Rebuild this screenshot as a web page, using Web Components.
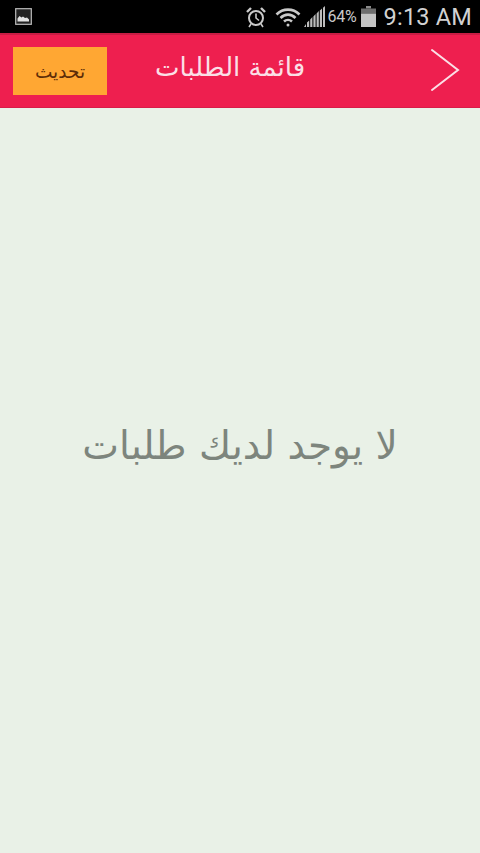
<!DOCTYPE html>
<html lang="ar">
<head>
<meta charset="utf-8">
<title>قائمة الطلبات</title>
<style>
  html, body { margin: 0; height: 100%; background: #e9f1e7; }
  body { display: flex; flex-direction: column; height: 853px; overflow: hidden; font-family: "DejaVu Sans", "Noto Sans", sans-serif; }
</style>
</head>
<body>
<status-bar></status-bar>
<app-header title-text="قائمة الطلبات" action="تحديث"></app-header>
<empty-state>لا يوجد لديك طلبات</empty-state>

<script>
class StatusBar extends HTMLElement {
  connectedCallback() {
    this.attachShadow({ mode: 'open' });
    this.shadowRoot.innerHTML = `
      <style>
        :host { display: flex; align-items: center; height: 33px; background: #000; color: #c9c9c9; padding: 0 8px 0 15px; font-family: "Roboto", "Liberation Sans", sans-serif; flex: none; }
        .right { display: flex; align-items: center; margin-left: auto; }
        svg { display: block; }
        .pct { font-size: 16px; margin: 0 4px 0 3px; letter-spacing: -0.2px; }
        .time { font-size: 23.5px; margin-left: 8px; letter-spacing: 0.2px; color: #d2d2d2; }
      </style>
      <svg width="17" height="17" viewBox="0 0 17 17">
        <rect x="0.7" y="0.7" width="15.6" height="15.6" fill="#222" stroke="#bdbdbd" stroke-width="1.2"/>
        <path d="M2.5 13.5v-3l2-2.500 2 1.500 1.500-1 2 1.500 2-.5 2 2v2z" fill="#e2e2e2"/>
      </svg>
      <div class="right">
        <svg width="22" height="22" viewBox="0 0 22 22" fill="none" stroke="#c9c9c9">
          <circle cx="11" cy="12" r="7" stroke-width="2"/>
          <path d="M11 7.500V12l3 2.500" stroke-width="1.600"/>
          <path d="M2 6l4-4M20 6l-4-4" stroke-width="2.400"/>
          <path d="M6 18l-2 3M16 18l2 3" stroke-width="1.600"/>
        </svg>
        <svg width="26" height="20" viewBox="0 0 26 20" fill="none" stroke="#c9c9c9" stroke-width="2.600" style="margin-left:8px">
          <path d="M1.500 7.500C8 1 18 1 24.500 7.500"/>
          <path d="M5.500 11C10 6.500 16 6.500 20.500 11"/>
          <path d="M9 14.500C11.300 12.400 14.700 12.400 17 14.500"/>
          <circle cx="13" cy="18" r="1.500" fill="#c9c9c9" stroke="none"/>
        </svg>
        <svg width="21" height="22" viewBox="0 0 21 22" fill="#bcbcbc" style="margin-left:3px">
          <path d="M0 21l2-3v3zM3 21v-4.500l2.200-2V21zM6.200 21v-7.500l2.200-2.500v10zM9.400 21V10.500l2.200-2.500v13zM12.600 21V7.500l2.200-2.500v16zM15.800 21V4.500L18 2.500V21zM19 21V1.800L21 0v21z"/>
        </svg>
        <span class="pct">64%</span>
        <svg width="15" height="21" viewBox="0 0 15 21" fill="#c4c4c4">
          <rect x="5" y="0" width="5" height="2.500" fill="#8a8a8a"/>
          <rect x="0" y="2.500" width="15" height="5" fill="#6e6e6e"/>
          <rect x="0" y="7.500" width="15" height="13.500"/>
        </svg>
        <span class="time">9:13 AM</span>
      </div>
    `;
  }
}
customElements.define('status-bar', StatusBar);

class AppHeader extends HTMLElement {
  connectedCallback() {
    this.attachShadow({ mode: 'open' });
    this.shadowRoot.innerHTML = `
      <style>
        :host { display: flex; align-items: center; height: 75px; box-sizing: border-box; background: #ee1f4f; border-top: 2px solid #c81c44; border-bottom: 1px solid #d81d49; padding: 0 20px 0 13px; flex: none; }
        .refresh { all: unset; display: flex; align-items: center; justify-content: center; width: 94px; height: 48px; background: #ffa733; color: #5c2c08; font-size: 18.500px; }
        h1 { margin: 0 0 8px 48px; font-size: 26px; font-weight: 400; color: #fbdfe6; }
        .back { margin-left: auto; display: block; margin-top: -2px; }
      </style>
      <button class="refresh">${this.getAttribute('action')}</button>
      <h1>${this.getAttribute('title-text')}</h1>
      <svg class="back" width="30" height="44" viewBox="0 0 30 44" fill="none" stroke="#fbdfe6" stroke-width="2" stroke-linecap="round">
        <path d="M2 2l26 20L2 42"/>
      </svg>
    `;
  }
}
customElements.define('app-header', AppHeader);

class EmptyState extends HTMLElement {
  connectedCallback() {
    this.attachShadow({ mode: 'open' });
    this.shadowRoot.innerHTML = `
      <style>
        :host { display: flex; flex: 1; align-items: center; justify-content: center; background: #e9f1e7; color: #7d857d; font-size: 39px; direction: rtl; }
        div { margin-bottom: 70px; }
      </style>
      <div><slot></slot></div>
    `;
  }
}
customElements.define('empty-state', EmptyState);
</script>
</body>
</html>
